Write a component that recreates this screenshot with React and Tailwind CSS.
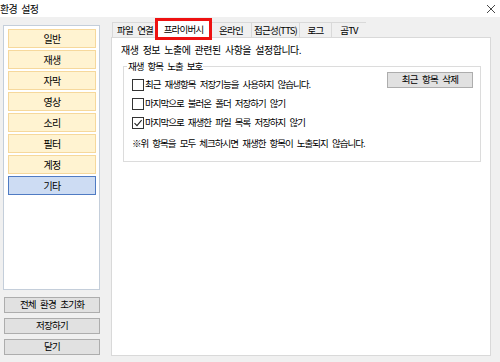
import React from 'react';

const FONT = { fontFamily: '"Noto Sans CJK KR", "Noto Sans", sans-serif' };

const categories = ['일반', '재생', '자막', '영상', '소리', '필터', '계정', '기타'];
const tabs = [
  { label: '파일 연결', w: 'w-[45px]' },
  { label: '프라이버시', w: 'w-[53px]', active: true },
  { label: '온라인', w: 'w-[41px]' },
  { label: '접근성(TTS)', w: 'w-[48px]' },
  { label: '로그', w: 'w-[32px]' },
  { label: '곰TV', w: 'w-[35px]' },
];

function CheckRow({ checked, children }) {
  return (
    <div className="flex items-center h-[19px]">
      <span className="w-[12px] h-[12px] border border-[#333] bg-white flex items-center justify-center mr-[1px] shrink-0">
        {checked && (
          <svg width="10" height="10" viewBox="0 0 10 10">
            <path d="M1.5 5.2 L4 7.6 L8.6 2.2" fill="none" stroke="#222" strokeWidth="1.1" />
          </svg>
        )}
      </span>
      <span className="text-[9.5px] tracking-[-1px] [word-spacing:3px] whitespace-nowrap">{children}</span>
    </div>
  );
}

function SideButton({ children }) {
  return (
    <button className="h-[16px] w-full bg-[#e1e1e1] border border-[#adadad] text-[9.5px] leading-none tracking-[-0.8px] [word-spacing:3px] text-black">
      {children}
    </button>
  );
}

export default function App() {
  return (
    <div className="w-[500px] h-[362px] bg-[#f0f0f0] flex flex-col text-black text-[10px] overflow-hidden" style={FONT}>
      {/* title bar */}
      <div className="h-[17px] bg-white flex items-center justify-between shrink-0">
        <span className="text-[10px] tracking-[-0.8px] [word-spacing:3px]">환경 설정</span>
        <svg width="10" height="10" viewBox="0 0 10 10" className="mr-[4px]">
          <path d="M1 1 L9 9 M9 1 L1 9" stroke="#333" strokeWidth="0.9" />
        </svg>
      </div>

      <div className="flex flex-1 min-h-0">
        {/* left column */}
        <div className="w-[97px] ml-[3px] pt-[8px] flex flex-col">
          <div className="h-[265px] bg-white border border-[#c4ceda] pl-[4px] pr-[3px] pt-[3px] flex flex-col gap-[2px]">
            {categories.map((c) => (
              <div
                key={c}
                className={
                  c === '기타'
                    ? 'h-[19px] flex items-center justify-center bg-[#cddcf3] border border-[#4f7bc3] tracking-[-0.6px]'
                    : 'h-[19px] flex items-center justify-center bg-[#fff3d1] border border-[#f6d89c] tracking-[-0.6px]'
                }
              >
                {c}
              </div>
            ))}
          </div>
          <div className="mt-[7px] ml-[1px] flex flex-col gap-[5px]">
            <SideButton>전체 환경 초기화</SideButton>
            <SideButton>저장하기</SideButton>
            <SideButton>닫기</SideButton>
          </div>
        </div>

        {/* right column */}
        <div className="ml-[11px] w-[380px] flex flex-col pb-[6px]">
          <div className="h-[20px] flex items-end pl-[1px] shrink-0 text-[9.5px] [word-spacing:3px]">
            {tabs.map((t) =>
              t.active ? (
                <div key={t.label} className={`${t.w} h-[18px] relative bg-white border border-b-0 border-[#d9d9d9] flex items-center justify-center tracking-[-0.8px] z-10 -mb-[1px] whitespace-nowrap`}>
                  {t.label}
                  <span className="absolute left-[-3px] right-[-3px] top-[-3px] bottom-[-2px] border-[3px] border-[#ee1111]" />
                </div>
              ) : (
                <div key={t.label} className={`${t.w} h-[15px] bg-[#f0f0f0] border border-b-0 border-r-0 border-[#d9d9d9] flex items-center justify-center tracking-[-0.8px] whitespace-nowrap`}>
                  {t.label}
                </div>
              )
            )}
          </div>
          <div className="flex-1 bg-white border border-[#d9d9d9] pt-[3px] pl-[9px]">
            <div className="h-[16px] flex items-center tracking-[-0.5px] [word-spacing:2.5px]">재생 정보 노출에 관련된 사항을 설정합니다.</div>
            <div className="relative mt-[9px] ml-[2px] w-[358px] h-[96px] border border-[#dcdcdc] pl-[8px] pt-[8px]">
              <span className="absolute left-[3px] top-[-8px] bg-white px-[1px] text-[9.5px] tracking-[-1px] [word-spacing:3px] leading-[14px]">재생 항목 노출 보호</span>
              <button className="absolute left-[263px] top-[5px] w-[86px] h-[16px] bg-[#e1e1e1] border border-[#adadad] text-[9.5px] leading-none tracking-[-0.8px] [word-spacing:3px]">
                최근 항목 삭제
              </button>
              <CheckRow>최근 재생항목 저장기능을 사용하지 않습니다.</CheckRow>
              <CheckRow>마지막으로 불러온 폴더 저장하기 않기</CheckRow>
              <CheckRow checked>마지막으로 재생한 파일 목록 저장하지 않기</CheckRow>
              <div className="h-[22px] flex items-center text-[9.5px] tracking-[-1px] [word-spacing:3px] whitespace-nowrap">※위 항목을 모두 체크하시면 재생한 항목이 노출되지 않습니다.</div>
            </div>
          </div>
        </div>
      </div>
    </div>
  );
}
